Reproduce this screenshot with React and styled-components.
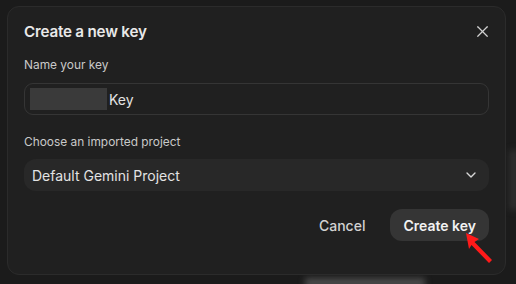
import React from 'react'
import styled, { createGlobalStyle } from 'styled-components'
import { X, ChevronDown } from 'lucide-react'

const GlobalStyle = createGlobalStyle`
  html, body {
    margin: 0;
    padding: 0;
    background: #1b1b1b;
    font-family: Inter, "Noto Sans", sans-serif;
  }
`

const Page = styled.div`
  position: relative;
  width: 516px;
  height: 284px;
  overflow: hidden;
  padding: 6px 0 0 7px;
  box-sizing: border-box;
`

const Behind = styled.div`
  position: absolute;
  left: ${({ x }) => x}px;
  top: ${({ y }) => y}px;
  width: ${({ w }) => w}px;
  height: ${({ h }) => h}px;
  background: ${({ bg }) => bg};
  filter: blur(3px);
`

const Dialog = styled.div`
  position: relative;
  width: 499px;
  height: 269px;
  box-sizing: border-box;
  background: #202020;
  border: 1px solid #2b2b2b;
  border-radius: 12px;
  padding: 14px 16px 0 16px;
  display: flex;
  flex-direction: column;
`

const Header = styled.div`
  display: flex;
  align-items: center;
  justify-content: space-between;
  height: 20px;
`

const Title = styled.h2`
  margin: 0;
  font-size: 15.2px;
  font-weight: 600;
  color: #e9e9e9;
  letter-spacing: -0.2px;
`

const CloseButton = styled.button`
  background: none;
  border: none;
  padding: 0;
  margin-right: -3px;
  display: flex;
  color: #d0d0d0;
`

const Label = styled.div`
  font-size: 11.9px;
  line-height: 16px;
  color: #c9c9c9;
  margin-top: ${({ top }) => top}px;
`

const Input = styled.div`
  margin-top: 10px;
  height: 32px;
  box-sizing: border-box;
  border: 1px solid #353535;
  border-radius: 9px;
  display: flex;
  align-items: center;
  padding-left: 5px;
  font-size: 14px;
  color: #e3e3e3;
`

const Redacted = styled.span`
  width: 77px;
  height: 22px;
  background: #3a3a3a;
  margin-right: 2px;
  filter: blur(0.6px);
`

const Select = styled.div`
  margin-top: 9px;
  height: 32px;
  border-radius: 12px;
  background: #282828;
  display: flex;
  align-items: center;
  justify-content: space-between;
  padding: 0 10px 0 8px;
  font-size: 14px;
  color: #e3e3e3;
`

const Footer = styled.div`
  margin-top: 18px;
  display: flex;
  justify-content: flex-end;
  align-items: center;
  gap: 12px;
  position: relative;
`

const Button = styled.button`
  height: 32px;
  border: none;
  border-radius: 12px;
  padding: 0 13px;
  font-family: inherit;
  font-size: 14px;
  font-weight: ${({ primary }) => (primary ? 600 : 500)};
  background: ${({ primary }) => (primary ? '#353535' : 'transparent')};
  color: ${({ primary }) => (primary ? '#f2f2f2' : '#d2d2d2')};
`

const Cursor = styled.svg`
  position: absolute;
  left: 441px;
  top: 23px;
`

export default function App() {
  return (
    <>
      <GlobalStyle />
      <Page>
        <Behind x={305} y={278} w={120} h={10} bg="#4a4a4a" />
        <Behind x={509} y={150} w={10} h={60} bg="#2e2e2e" />
        <Dialog>
          <Header>
            <Title>Create a new key</Title>
            <CloseButton>
              <X size={19} strokeWidth={1.5} />
            </CloseButton>
          </Header>
          <Label top={16}>Name your key</Label>
          <Input>
            <Redacted />
            Key
          </Input>
          <Label top={19}>Choose an imported project</Label>
          <Select>
            Default Gemini Project
            <ChevronDown size={16} color="#d8d8d8" />
          </Select>
          <Footer>
            <Button>Cancel</Button>
            <Button primary>Create key</Button>
            <Cursor width="30" height="34" viewBox="0 0 30 34">
              <path d="M1 1 L14 7 L9.5 10 L27 28 L24 31 L6.5 13 L4 17 Z" fill="#ff1a1a" />
            </Cursor>
          </Footer>
        </Dialog>
      </Page>
    </>
  )
}
